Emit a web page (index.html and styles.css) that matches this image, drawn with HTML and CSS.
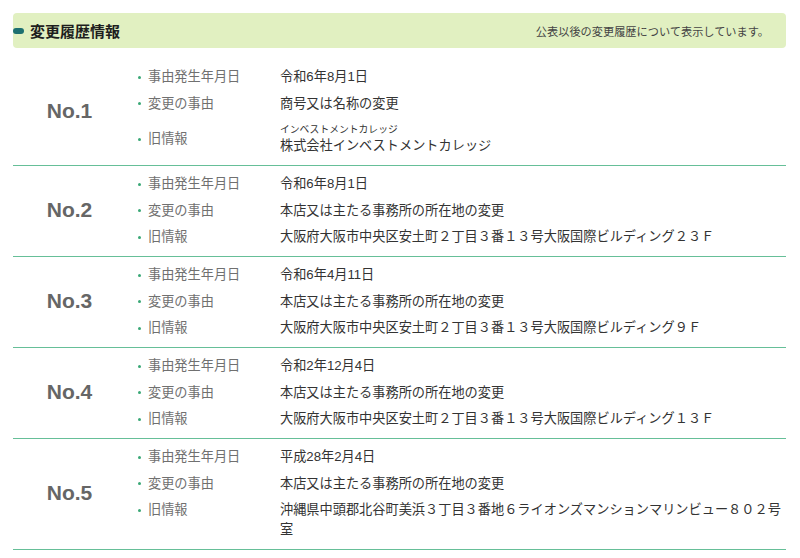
FILE: index.html
```html
<!DOCTYPE html>
<html lang="ja">
<head>
<meta charset="utf-8">
<title>変更履歴情報</title>
<link rel="stylesheet" href="styles.css">
</head>
<body>
<section class="history">
  <div class="history-head">
    <h2 class="title"><span class="title-mark"></span>変更履歴情報</h2>
    <p class="note">公表以後の変更履歴について表示しています。</p>
  </div>
  <ul class="list">
    <li class="entry">
      <div class="entry-no">No.1</div>
      <dl class="fields">
        <div class="field"><dt><span class="dot"></span>事由発生年月日</dt><dd>令和6年8月1日</dd></div>
        <div class="field"><dt><span class="dot"></span>変更の事由</dt><dd>商号又は名称の変更</dd></div>
        <div class="field field-kana"><dt><span class="dot"></span>旧情報</dt><dd><span class="kana">インベストメントカレッジ</span><span class="main">株式会社インベストメントカレッジ</span></dd></div>
      </dl>
    </li>
    <li class="entry">
      <div class="entry-no">No.2</div>
      <dl class="fields">
        <div class="field"><dt><span class="dot"></span>事由発生年月日</dt><dd>令和6年8月1日</dd></div>
        <div class="field"><dt><span class="dot"></span>変更の事由</dt><dd>本店又は主たる事務所の所在地の変更</dd></div>
        <div class="field"><dt><span class="dot"></span>旧情報</dt><dd>大阪府大阪市中央区安土町２丁目３番１３号大阪国際ビルディング２３Ｆ</dd></div>
      </dl>
    </li>
    <li class="entry">
      <div class="entry-no">No.3</div>
      <dl class="fields">
        <div class="field"><dt><span class="dot"></span>事由発生年月日</dt><dd>令和6年4月11日</dd></div>
        <div class="field"><dt><span class="dot"></span>変更の事由</dt><dd>本店又は主たる事務所の所在地の変更</dd></div>
        <div class="field"><dt><span class="dot"></span>旧情報</dt><dd>大阪府大阪市中央区安土町２丁目３番１３号大阪国際ビルディング９Ｆ</dd></div>
      </dl>
    </li>
    <li class="entry">
      <div class="entry-no">No.4</div>
      <dl class="fields">
        <div class="field"><dt><span class="dot"></span>事由発生年月日</dt><dd>令和2年12月4日</dd></div>
        <div class="field"><dt><span class="dot"></span>変更の事由</dt><dd>本店又は主たる事務所の所在地の変更</dd></div>
        <div class="field"><dt><span class="dot"></span>旧情報</dt><dd>大阪府大阪市中央区安土町２丁目３番１３号大阪国際ビルディング１３Ｆ</dd></div>
      </dl>
    </li>
    <li class="entry">
      <div class="entry-no">No.5</div>
      <dl class="fields">
        <div class="field"><dt><span class="dot"></span>事由発生年月日</dt><dd>平成28年2月4日</dd></div>
        <div class="field"><dt><span class="dot"></span>変更の事由</dt><dd>本店又は主たる事務所の所在地の変更</dd></div>
        <div class="field"><dt><span class="dot"></span>旧情報</dt><dd>沖縄県中頭郡北谷町美浜３丁目３番地６ライオンズマンションマリンビュー８０２号室</dd></div>
      </dl>
    </li>
  </ul>
</section>
</body>
</html>
```

FILE: styles.css
```css
html, body {
  margin: 0;
  padding: 0;
  background: #ffffff;
}

body {
  font-family: "Liberation Sans", "Noto Sans CJK JP", sans-serif;
  color: #333333;
}

.history {
  margin: 13px 14px 0 13px;
}

.history-head {
  display: flex;
  align-items: center;
  justify-content: space-between;
  height: 35px;
  background: #e1f0c1;
  border-radius: 4px;
  padding: 0 17px 0 0;
}

.title {
  display: flex;
  align-items: center;
  gap: 6px;
  margin: 0;
  font-family: "Noto Sans CJK JP", sans-serif;
  font-size: 15px;
  font-weight: 700;
  color: #1e1e1e;
  line-height: 20px;
}

.title-mark {
  display: inline-block;
  width: 11px;
  height: 6px;
  background: #1d7070;
  border-radius: 3px;
}

.note {
  margin: 0;
  font-family: "Noto Sans CJK JP", sans-serif;
  font-size: 11.2px;
  color: #444444;
  line-height: 16px;
}

.list {
  list-style: none;
  margin: 11px 0 0 0;
  padding: 0;
}

.entry {
  display: flex;
  align-items: center;
  padding: 8px 0 9px 0;
  border-bottom: 1px solid #66bf98;
}

.entry-no {
  width: 113px;
  flex: none;
  text-align: center;
  font-family: "Liberation Sans", sans-serif;
  font-weight: 700;
  font-size: 21px;
  color: #666666;
  padding-bottom: 2px;
}

.fields {
  flex: 1;
  display: flex;
  flex-direction: column;
  gap: 6.5px;
  margin: 0;
}

.field {
  display: flex;
  align-items: flex-start;
}

.field dt {
  width: 142px;
  flex: none;
  padding-left: 12px;
  display: flex;
  align-items: center;
  gap: 7px;
  font-size: 13.2px;
  line-height: 20px;
  color: #707070;
}

.dot {
  display: inline-block;
  width: 3px;
  height: 3px;
  border-radius: 50%;
  background: #3aa876;
}

.field dd {
  flex: 1;
  margin: 0;
  font-size: 13.2px;
  line-height: 20px;
  color: #333333;
}

.field-kana dt {
  padding-top: 9px;
}

.kana {
  display: block;
  font-size: 9.8px;
  line-height: 12px;
  padding-top: 4px;
}

.main {
  display: block;
}
```
